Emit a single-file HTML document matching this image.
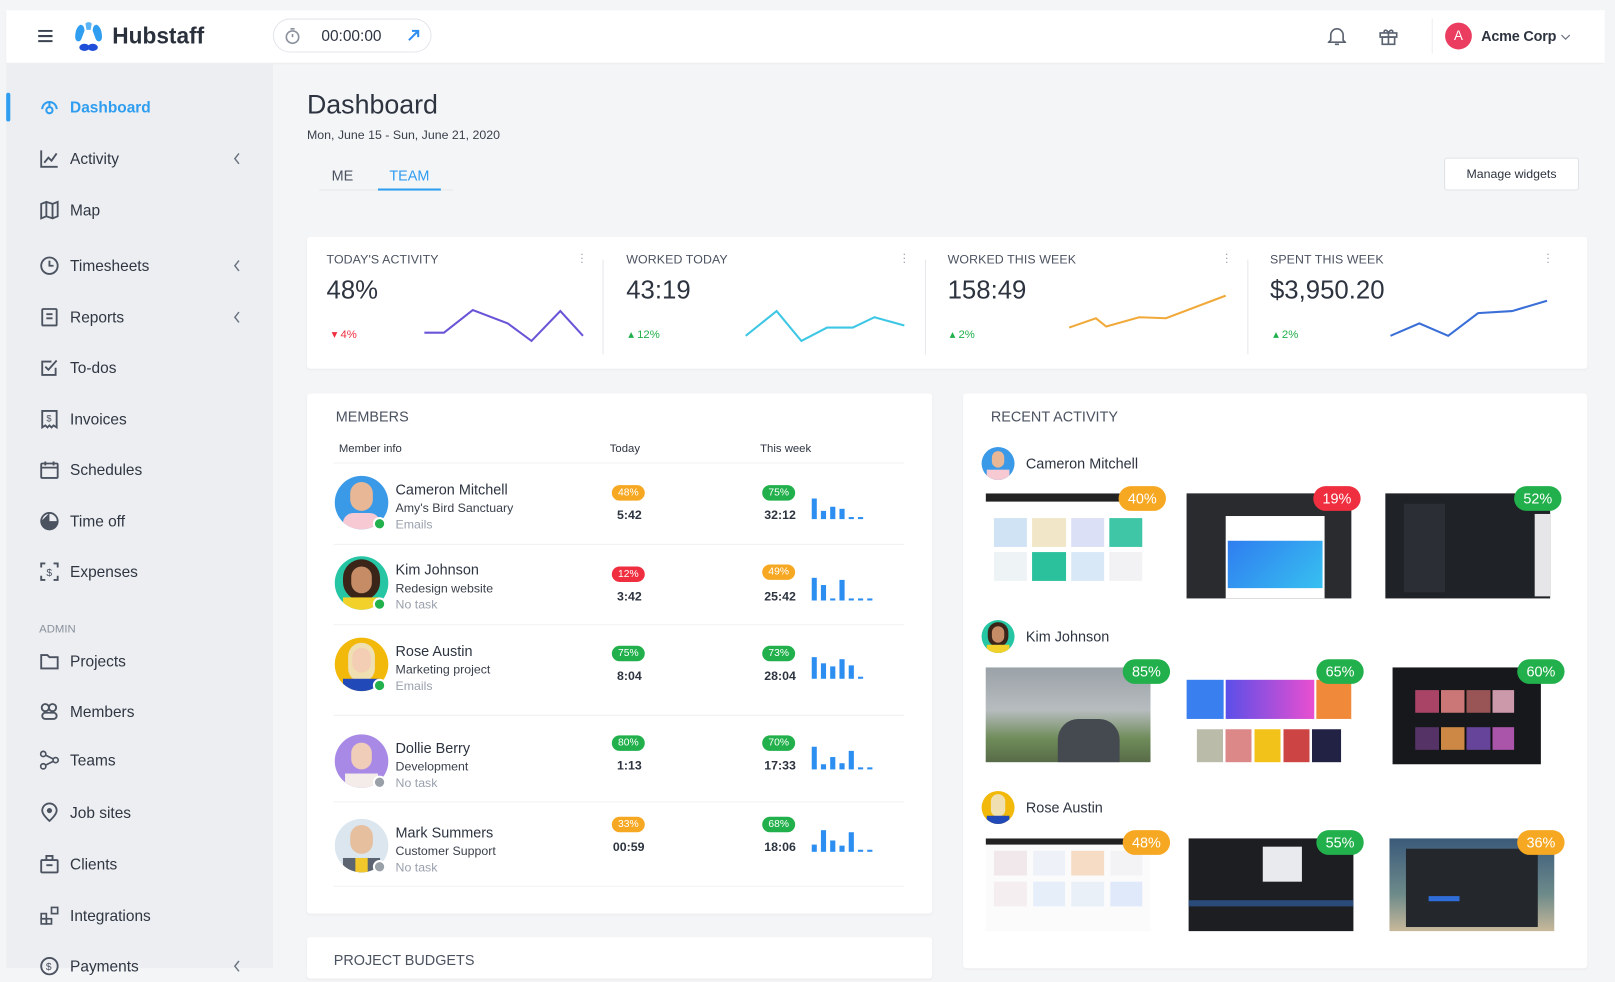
<!DOCTYPE html>
<html><head><meta charset="utf-8">
<style>
*{box-sizing:border-box;margin:0;padding:0}
html,body{width:1615px;height:968px;overflow:hidden;background:#f4f5f7;font-family:"Liberation Sans",Arial,sans-serif;color:#2d3440}
#w{position:absolute;left:0;top:0;width:1568px;height:940px;transform:scale(1.03);transform-origin:0 0;background:#f4f5f7}
.a{position:absolute}
.top{left:6px;top:10px;width:1552px;height:51px;background:#fff;box-shadow:0 1px 2px rgba(0,0,0,.05)}
.side{left:6px;top:61px;width:259px;height:879px;background:#eceef1}
.nav{position:absolute;left:0;width:259px;height:30px;font-size:15px;color:#2f3642}
.nav svg{position:absolute;left:32px;top:5px}
.nav span{position:absolute;left:62px;top:7px}
.nav svg.ch{left:220px;top:9px}
.card{background:#fff;border-radius:3px;box-shadow:0 1px 2px rgba(0,0,0,.04)}
.lbl{font-size:12px;color:#4b5260;letter-spacing:.1px}
.big{font-size:25px;color:#2d3440}
.pill{position:absolute;height:15px;border-radius:8px;color:#fff;font-size:10px;text-align:center;line-height:15px;width:32px}
.or{background:#f7a823}.rd{background:#ef2f3f}.gr{background:#21b04b}
.nm{font-size:14px;color:#2d3440}
.sub{font-size:12px;color:#3a404b}
.tk{font-size:12px;color:#9aa1ad}
.tm{font-size:12px;font-weight:bold;color:#2d3440;position:absolute}
.bp{position:absolute;height:24px;border-radius:12px;color:#fff;font-size:14px;text-align:center;line-height:24px;width:46px}
.shot{position:absolute;width:160px;height:102px;overflow:hidden}
</style></head><body><div id="w">

<div class="a top">
  <svg class="a" style="left:31px;top:19px" width="14" height="12"><path d="M0 1h14M0 6h14M0 11h14" stroke="#3b4250" stroke-width="2"/></svg>
  <svg class="a" style="left:64px;top:10px" width="32" height="32" viewBox="0 0 32 32"><path d="M8 4c3 0 4 3 4 6l-3 8c-2 4-6 2-6-2 0-4 1-10 5-12z" fill="#2f9df0"/><path d="M24 4c-3 0-4 3-4 6l3 8c2 4 6 2 6-2 0-4-1-10-5-12z" fill="#2f9df0"/><path d="M13 3c1-2 5-2 6 0l-1 6h-4z" fill="#5ab4f5"/><ellipse cx="12" cy="26" rx="5" ry="3.5" fill="#1f4fd8"/><ellipse cx="20" cy="26" rx="5" ry="3.5" fill="#1f4fd8"/></svg>
  <div class="a" style="left:103px;top:12px;font-size:22px;font-weight:bold;color:#2a313c">Hubstaff</div>
  <div class="a" style="left:259px;top:8px;width:154px;height:33px;border:1px solid #e3e6ea;border-radius:17px"></div>
  <svg class="a" style="left:270px;top:16px" width="16" height="18"><circle cx="8" cy="10" r="6" fill="none" stroke="#8a919c" stroke-width="1.6"/><path d="M6 2h4M8 10V7" stroke="#8a919c" stroke-width="1.6"/></svg>
  <div class="a" style="left:306px;top:17px;font-size:15px;color:#2d3440">00:00:00</div>
  <svg class="a" style="left:390px;top:18px" width="12" height="12"><path d="M1 11L10 2M4 2h6v6" stroke="#2f8ef0" stroke-width="2" fill="none"/></svg>
  <svg class="a" style="left:1283px;top:15px" width="18" height="20"><path d="M3 14V9a6 6 0 0112 0v5l2 2H1z" fill="none" stroke="#5b6270" stroke-width="1.6"/><path d="M7 18h4" stroke="#5b6270" stroke-width="1.6"/></svg>
  <svg class="a" style="left:1332px;top:15px" width="20" height="20"><rect x="2" y="7" width="16" height="4" fill="none" stroke="#5b6270" stroke-width="1.6"/><rect x="4" y="11" width="12" height="7" fill="none" stroke="#5b6270" stroke-width="1.6"/><path d="M10 7v11M10 7C8 3 5 4 6 7M10 7c2-4 5-3 4 0" fill="none" stroke="#5b6270" stroke-width="1.6"/></svg>
  <div class="a" style="left:1384px;top:8px;width:1px;height:34px;background:#eceef1"></div>
  <div class="a" style="left:1397px;top:12px;width:26px;height:26px;border-radius:13px;background:#ea3d5f;color:#fff;font-size:13px;text-align:center;line-height:26px">A</div>
  <div class="a" style="left:1432px;top:17px;font-size:14px;font-weight:bold;color:#2d3440;letter-spacing:-.2px">Acme Corp</div>
  <svg class="a" style="left:1509px;top:23px" width="10" height="7"><path d="M1 1l4 4 4-4" stroke="#6b7280" stroke-width="1.2" fill="none"/></svg>
</div>

<div class="a side">
  <div class="a" style="left:0;top:29px;width:4px;height:28px;background:#2f9df0;border-radius:2px"></div>
  <div class="nav" style="top:28px;color:#2f9df0;font-weight:bold"><svg width="20" height="20"><path d="M3 12a7 7 0 0114 0" fill="none" stroke="#2f9df0" stroke-width="2"/><circle cx="10" cy="13" r="3" fill="none" stroke="#2f9df0" stroke-width="2"/><path d="M10 10V5" stroke="#2f9df0" stroke-width="2"/></svg><span>Dashboard</span></div>
  <div class="nav" style="top:78px"><svg width="20" height="20"><path d="M2 2v16h16M5 14l4-5 3 3 5-7" fill="none" stroke="#4b5260" stroke-width="1.8"/></svg><span>Activity</span><svg class="ch" width="8" height="12"><path d="M6 1L2 6l4 5" stroke="#6b7280" stroke-width="1.4" fill="none"/></svg></div>
  <div class="nav" style="top:128px"><svg width="20" height="20"><path d="M2 4l5-2 6 2 5-2v14l-5 2-6-2-5 2zM7 2v14M13 4v14" fill="none" stroke="#4b5260" stroke-width="1.8"/></svg><span>Map</span></div>
  <div class="nav" style="top:182px"><svg width="20" height="20"><circle cx="10" cy="10" r="8" fill="none" stroke="#4b5260" stroke-width="1.8"/><path d="M10 5v5h4" fill="none" stroke="#4b5260" stroke-width="1.8"/></svg><span>Timesheets</span><svg class="ch" width="8" height="12"><path d="M6 1L2 6l4 5" stroke="#6b7280" stroke-width="1.4" fill="none"/></svg></div>
  <div class="nav" style="top:232px"><svg width="20" height="20"><rect x="3" y="2" width="14" height="16" rx="1" fill="none" stroke="#4b5260" stroke-width="1.8"/><path d="M7 7h6M7 11h6" stroke="#4b5260" stroke-width="1.8"/></svg><span>Reports</span><svg class="ch" width="8" height="12"><path d="M6 1L2 6l4 5" stroke="#6b7280" stroke-width="1.4" fill="none"/></svg></div>
  <div class="nav" style="top:281px"><svg width="20" height="20"><path d="M16 10v7H3V4h9" fill="none" stroke="#4b5260" stroke-width="1.8"/><path d="M6 9l3 3 8-9" fill="none" stroke="#4b5260" stroke-width="1.8"/></svg><span>To-dos</span></div>
  <div class="nav" style="top:331px"><svg width="20" height="20"><path d="M3 2h14v16l-3-2-2 2-2-2-2 2-2-2-3 2z" fill="none" stroke="#4b5260" stroke-width="1.8"/><text x="7" y="12" font-size="9" fill="#4b5260" font-family="Liberation Sans">$</text></svg><span>Invoices</span></div>
  <div class="nav" style="top:380px"><svg width="20" height="20"><rect x="2" y="4" width="16" height="14" rx="1" fill="none" stroke="#4b5260" stroke-width="1.8"/><path d="M2 8h16M6 2v4M14 2v4" stroke="#4b5260" stroke-width="1.8"/></svg><span>Schedules</span></div>
  <div class="nav" style="top:430px"><svg width="20" height="20"><circle cx="10" cy="10" r="8" fill="none" stroke="#4b5260" stroke-width="1.8"/><path d="M10 2v8h8a8 8 0 01-8 8 8 8 0 01-8-8" fill="#4b5260"/></svg><span>Time off</span></div>
  <div class="nav" style="top:479px"><svg width="20" height="20"><path d="M2 6V2h4M14 2h4v4M18 14v4h-4M6 18H2v-4" fill="none" stroke="#4b5260" stroke-width="1.8"/><text x="7" y="14" font-size="10" fill="#4b5260" font-family="Liberation Sans">$</text></svg><span>Expenses</span></div>
  <div class="a" style="left:32px;top:544px;font-size:11px;color:#8a919c">ADMIN</div>
  <div class="nav" style="top:566px"><svg width="20" height="20"><path d="M2 4h6l2 2h8v11H2z" fill="none" stroke="#4b5260" stroke-width="1.8"/></svg><span>Projects</span></div>
  <div class="nav" style="top:615px"><svg width="20" height="20"><circle cx="6" cy="6" r="3.5" fill="none" stroke="#4b5260" stroke-width="1.8"/><circle cx="13" cy="6" r="3.5" fill="none" stroke="#4b5260" stroke-width="1.8"/><rect x="3" y="11" width="14" height="6" rx="3" fill="none" stroke="#4b5260" stroke-width="1.8"/></svg><span>Members</span></div>
  <div class="nav" style="top:662px"><svg width="20" height="20"><circle cx="4" cy="4" r="2.5" fill="none" stroke="#4b5260" stroke-width="1.6"/><circle cx="4" cy="16" r="2.5" fill="none" stroke="#4b5260" stroke-width="1.6"/><circle cx="16" cy="10" r="2.5" fill="none" stroke="#4b5260" stroke-width="1.6"/><path d="M6 5l8 4M6 15l8-4" stroke="#4b5260" stroke-width="1.6"/></svg><span>Teams</span></div>
  <div class="nav" style="top:713px"><svg width="20" height="20"><path d="M10 18s-7-6-7-10a7 7 0 0114 0c0 4-7 10-7 10z" fill="none" stroke="#4b5260" stroke-width="1.8"/><circle cx="10" cy="8" r="2.5" fill="#4b5260"/></svg><span>Job sites</span></div>
  <div class="nav" style="top:763px"><svg width="20" height="20"><rect x="2" y="6" width="16" height="12" rx="1" fill="none" stroke="#4b5260" stroke-width="1.8"/><path d="M7 6V2h6v4M7 11h6" fill="none" stroke="#4b5260" stroke-width="1.8"/></svg><span>Clients</span></div>
  <div class="nav" style="top:813px"><svg width="20" height="20"><rect x="2" y="8" width="5" height="5" fill="none" stroke="#4b5260" stroke-width="1.6"/><rect x="2" y="13" width="5" height="5" fill="none" stroke="#4b5260" stroke-width="1.6"/><rect x="7" y="13" width="5" height="5" fill="none" stroke="#4b5260" stroke-width="1.6"/><rect x="12" y="2" width="6" height="6" fill="none" stroke="#4b5260" stroke-width="1.6"/></svg><span>Integrations</span></div>
  <div class="nav" style="top:862px"><svg width="20" height="20"><circle cx="10" cy="10" r="8" fill="none" stroke="#4b5260" stroke-width="1.8"/><text x="6.5" y="14" font-size="10" fill="#4b5260" font-family="Liberation Sans">$</text></svg><span>Payments</span><svg class="ch" width="8" height="12"><path d="M6 1L2 6l4 5" stroke="#6b7280" stroke-width="1.4" fill="none"/></svg></div>
</div>

<div class="a" style="left:298px;top:86px;font-size:26px;color:#2d3440">Dashboard</div>
<div class="a" style="left:298px;top:124px;font-size:12px;color:#3a404b">Mon, June 15 - Sun, June 21, 2020</div>
<div class="a" style="left:310px;top:184px;width:130px;height:1px;background:#e5e7eb"></div>
<div class="a" style="left:322px;top:162px;font-size:14px;color:#4b5260">ME</div>
<div class="a" style="left:378px;top:162px;font-size:14px;color:#2f9df0">TEAM</div>
<div class="a" style="left:367px;top:183px;width:61px;height:2px;background:#2f9df0"></div>
<div class="a" style="left:1402px;top:153px;width:131px;height:32px;background:#fff;border:1px solid #dfe2e6;border-radius:3px;font-size:12px;color:#2d3440;text-align:center;line-height:30px">Manage widgets</div>

<div class="a card" style="left:298px;top:230px;width:1243px;height:128px">
  <div class="a" style="left:287px;top:22px;width:1px;height:92px;background:#e5e7eb"></div>
  <div class="a" style="left:600px;top:22px;width:1px;height:92px;background:#e5e7eb"></div>
  <div class="a" style="left:913px;top:22px;width:1px;height:92px;background:#e5e7eb"></div>
  <div class="a lbl" style="left:19px;top:15px">TODAY'S ACTIVITY</div>
  <div class="a lbl" style="left:310px;top:15px">WORKED TODAY</div>
  <div class="a lbl" style="left:622px;top:15px">WORKED THIS WEEK</div>
  <div class="a lbl" style="left:935px;top:15px">SPENT THIS WEEK</div>
  <div class="a big" style="left:19px;top:38px">48%</div>
  <div class="a big" style="left:310px;top:38px">43:19</div>
  <div class="a big" style="left:622px;top:38px">158:49</div>
  <div class="a big" style="left:935px;top:38px">$3,950.20</div>
  <div class="a" style="left:24px;top:88px;font-size:11px;color:#ef2f3f">▾ 4%</div>
  <div class="a" style="left:312px;top:88px;font-size:11px;color:#21b04b">▴ 12%</div>
  <div class="a" style="left:624px;top:88px;font-size:11px;color:#21b04b">▴ 2%</div>
  <div class="a" style="left:938px;top:88px;font-size:11px;color:#21b04b">▴ 2%</div>
  <div class="a" style="left:265px;top:14px;color:#9aa1ad;font-size:12px;line-height:4px">·<br>·<br>·</div>
  <div class="a" style="left:578px;top:14px;color:#9aa1ad;font-size:12px;line-height:4px">·<br>·<br>·</div>
  <div class="a" style="left:891px;top:14px;color:#9aa1ad;font-size:12px;line-height:4px">·<br>·<br>·</div>
  <div class="a" style="left:1203px;top:14px;color:#9aa1ad;font-size:12px;line-height:4px">·<br>·<br>·</div>
  <svg class="a" style="left:0;top:0" width="1243" height="128"><polyline points="114,93 133,93 161,71 195,84 218,101 246,72 268,96" fill="none" stroke="#6a55d8" stroke-width="2"/><polyline points="426,96 456,72 480,101 505,88 530,88 551,78 580,86" fill="none" stroke="#3ec7e5" stroke-width="2"/><polyline points="740,88 766,79 776,87 808,78 834,79 892,57" fill="none" stroke="#f1a93a" stroke-width="2"/><polyline points="1052,96 1080,84 1108,96 1137,74 1170,72 1204,62" fill="none" stroke="#3a6fd8" stroke-width="2"/></svg>
</div>

<div class="a card" style="left:298px;top:382px;width:607px;height:505px">
  <div class="a" style="left:28px;top:14px;font-size:14px;color:#4b5260">MEMBERS</div>
  <div class="a" style="left:31px;top:48px;font-size:11px;color:#2d3440">Member info</div>
  <div class="a" style="left:294px;top:48px;font-size:11px;color:#2d3440">Today</div>
  <div class="a" style="left:440px;top:48px;font-size:11px;color:#2d3440">This week</div>
  <div class="a" style="left:26px;top:67px;width:554px;height:1px;background:#f0f1f3"></div>
  <div class="a" style="left:26px;top:146px;width:554px;height:1px;background:#f0f1f3"></div>
  <div class="a" style="left:26px;top:224px;width:554px;height:1px;background:#f0f1f3"></div>
  <div class="a" style="left:26px;top:312px;width:554px;height:1px;background:#f0f1f3"></div>
  <div class="a" style="left:26px;top:396px;width:554px;height:1px;background:#f0f1f3"></div>
  <div class="a" style="left:26px;top:478px;width:554px;height:1px;background:#f0f1f3"></div>
</div>

<div class="a card" style="left:935px;top:382px;width:606px;height:558px">
  <div class="a" style="left:27px;top:14px;font-size:14px;color:#4b5260">RECENT ACTIVITY</div>
  <div class="a nm" style="left:61px;top:60px">Cameron Mitchell</div>
  <div class="a nm" style="left:61px;top:228px">Kim Johnson</div>
  <div class="a nm" style="left:61px;top:394px">Rose Austin</div>
</div>
<div class="a card" style="left:298px;top:910px;width:607px;height:40px"><div class="a" style="left:26px;top:14px;font-size:14px;color:#4b5260">PROJECT BUDGETS</div></div>

<div class="a" style="left:325px;top:462px;width:52px;height:52px;border-radius:26px;background:#3b9ae8;overflow:hidden"><div class="a" style="left:15px;top:6px;width:22px;height:28px;border-radius:11px;background:#e8b795"></div><div class="a" style="left:8px;top:36px;width:36px;height:20px;border-radius:10px;background:#f7c9d3"></div></div>
<div class="a" style="left:325px;top:540px;width:52px;height:52px;border-radius:26px;background:#26c6a4;overflow:hidden"><div class="a" style="left:8px;top:3px;width:36px;height:40px;border-radius:18px;background:#3a2518"></div><div class="a" style="left:16px;top:10px;width:20px;height:26px;border-radius:10px;background:#c58c66"></div><div class="a" style="left:8px;top:40px;width:36px;height:16px;background:#f2d12a"></div></div>
<div class="a" style="left:325px;top:619px;width:52px;height:52px;border-radius:26px;background:#f2b90a;overflow:hidden"><div class="a" style="left:13px;top:5px;width:26px;height:38px;border-radius:13px;background:#f0dfb0"></div><div class="a" style="left:17px;top:10px;width:18px;height:24px;border-radius:9px;background:#f4cdb5"></div><div class="a" style="left:8px;top:40px;width:36px;height:16px;background:#2149b8"></div></div>
<div class="a" style="left:325px;top:713px;width:52px;height:52px;border-radius:26px;background:#a88ae6;overflow:hidden"><div class="a" style="left:16px;top:8px;width:20px;height:26px;border-radius:10px;background:#f0cdb8"></div><div class="a" style="left:10px;top:38px;width:32px;height:16px;background:#f3ece8"></div></div>
<div class="a" style="left:325px;top:795px;width:52px;height:52px;border-radius:26px;background:#dbe6ef;overflow:hidden"><div class="a" style="left:15px;top:6px;width:22px;height:28px;border-radius:11px;background:#e6bf9f"></div><div class="a" style="left:8px;top:38px;width:36px;height:16px;background:#5b6470"></div><div class="a" style="left:20px;top:38px;width:12px;height:16px;background:#f2c72b"></div></div>
<div class="a" style="left:362px;top:502px;width:13px;height:13px;border-radius:7px;background:#22b14c;border:2px solid #fff"></div>
<div class="a" style="left:362px;top:580px;width:13px;height:13px;border-radius:7px;background:#22b14c;border:2px solid #fff"></div>
<div class="a" style="left:362px;top:659px;width:13px;height:13px;border-radius:7px;background:#22b14c;border:2px solid #fff"></div>
<div class="a" style="left:362px;top:753px;width:13px;height:13px;border-radius:7px;background:#9aa0a8;border:2px solid #fff"></div>
<div class="a" style="left:362px;top:835px;width:13px;height:13px;border-radius:7px;background:#9aa0a8;border:2px solid #fff"></div>

<div class="a" style="left:384px;top:467px"><div class="nm">Cameron Mitchell</div><div class="sub" style="margin-top:3px">Amy's Bird Sanctuary</div><div class="tk" style="margin-top:2px">Emails</div></div>
<div class="a" style="left:384px;top:545px"><div class="nm">Kim Johnson</div><div class="sub" style="margin-top:3px">Redesign website</div><div class="tk" style="margin-top:2px">No task</div></div>
<div class="a" style="left:384px;top:624px"><div class="nm">Rose Austin</div><div class="sub" style="margin-top:3px">Marketing project</div><div class="tk" style="margin-top:2px">Emails</div></div>
<div class="a" style="left:384px;top:718px"><div class="nm">Dollie Berry</div><div class="sub" style="margin-top:3px">Development</div><div class="tk" style="margin-top:2px">No task</div></div>
<div class="a" style="left:384px;top:800px"><div class="nm">Mark Summers</div><div class="sub" style="margin-top:3px">Customer Support</div><div class="tk" style="margin-top:2px">No task</div></div>

<div class="pill or" style="left:594px;top:471px">48%</div><div class="tm" style="left:599px;top:493px">5:42</div>
<div class="pill gr" style="left:740px;top:471px">75%</div><div class="tm" style="left:742px;top:493px">32:12</div>
<div class="pill rd" style="left:594px;top:550px">12%</div><div class="tm" style="left:599px;top:572px">3:42</div>
<div class="pill or" style="left:740px;top:548px">49%</div><div class="tm" style="left:742px;top:572px">25:42</div>
<div class="pill gr" style="left:594px;top:627px">75%</div><div class="tm" style="left:599px;top:649px">8:04</div>
<div class="pill gr" style="left:740px;top:627px">73%</div><div class="tm" style="left:742px;top:649px">28:04</div>
<div class="pill gr" style="left:594px;top:714px">80%</div><div class="tm" style="left:599px;top:736px">1:13</div>
<div class="pill gr" style="left:740px;top:714px">70%</div><div class="tm" style="left:742px;top:736px">17:33</div>
<div class="pill or" style="left:594px;top:793px">33%</div><div class="tm" style="left:595px;top:815px">00:59</div>
<div class="pill gr" style="left:740px;top:793px">68%</div><div class="tm" style="left:742px;top:815px">18:06</div>

<svg class="a" style="left:788px;top:470px" width="64" height="370"><g fill="#2b8ef0">
<rect x="0" y="14" width="5" height="20"/><rect x="9" y="26" width="5" height="8"/><rect x="18" y="22" width="5" height="12"/><rect x="27" y="24" width="5" height="10"/><rect x="36" y="32" width="5" height="2"/><rect x="45" y="32" width="5" height="2"/>
<rect x="0" y="91" width="5" height="22"/><rect x="9" y="98" width="5" height="15"/><rect x="18" y="111" width="5" height="2"/><rect x="27" y="93" width="5" height="20"/><rect x="36" y="111" width="5" height="2"/><rect x="45" y="111" width="5" height="2"/><rect x="54" y="111" width="5" height="2"/>
<rect x="0" y="168" width="5" height="21"/><rect x="9" y="174" width="5" height="15"/><rect x="18" y="177" width="5" height="12"/><rect x="27" y="170" width="5" height="19"/><rect x="36" y="176" width="5" height="13"/><rect x="45" y="187" width="5" height="2"/>
<rect x="0" y="255" width="5" height="22"/><rect x="9" y="272" width="5" height="5"/><rect x="18" y="265" width="5" height="12"/><rect x="27" y="271" width="5" height="6"/><rect x="36" y="259" width="5" height="18"/><rect x="45" y="275" width="5" height="2"/><rect x="54" y="275" width="5" height="2"/>
<rect x="0" y="350" width="5" height="7"/><rect x="9" y="336" width="5" height="21"/><rect x="18" y="346" width="5" height="11"/><rect x="27" y="351" width="5" height="6"/><rect x="36" y="338" width="5" height="19"/><rect x="45" y="355" width="5" height="2"/><rect x="54" y="355" width="5" height="2"/></g></svg>

<div class="a" style="left:953px;top:434px;width:32px;height:32px;border-radius:16px;background:#3b9ae8;overflow:hidden"><div class="a" style="left:10px;top:4px;width:12px;height:16px;border-radius:6px;background:#e8b795"></div><div class="a" style="left:5px;top:22px;width:22px;height:12px;background:#f7c9d3"></div></div>
<div class="a" style="left:953px;top:602px;width:32px;height:32px;border-radius:16px;background:#26c6a4;overflow:hidden"><div class="a" style="left:6px;top:2px;width:20px;height:24px;border-radius:10px;background:#3a2518"></div><div class="a" style="left:10px;top:6px;width:12px;height:16px;border-radius:6px;background:#c58c66"></div><div class="a" style="left:5px;top:24px;width:22px;height:10px;background:#f2d12a"></div></div>
<div class="a" style="left:953px;top:768px;width:32px;height:32px;border-radius:16px;background:#f2b90a;overflow:hidden"><div class="a" style="left:9px;top:3px;width:14px;height:22px;border-radius:7px;background:#f0dfb0"></div><div class="a" style="left:5px;top:24px;width:22px;height:10px;background:#2149b8"></div></div>

<div class="shot" style="left:957px;top:479px;background:#fff"><div style="height:8px;background:#222"></div><div style="display:grid;grid-template-columns:repeat(4,1fr);gap:5px;padding:16px 8px 4px 8px"><div style="height:28px;background:#cfe3f5"></div><div style="height:28px;background:#f1e6c8"></div><div style="height:28px;background:#dce0f6"></div><div style="height:28px;background:#3ec6a6"></div><div style="height:28px;background:#eef3f6"></div><div style="height:28px;background:#2bc19d"></div><div style="height:28px;background:#d8e8f7"></div><div style="height:28px;background:#f2f2f4"></div></div></div>
<div class="shot" style="left:1152px;top:479px;background:#2a2b2e"><div class="a" style="left:38px;top:22px;width:96px;height:80px;background:#fff"></div><div class="a" style="left:40px;top:46px;width:92px;height:46px;background:linear-gradient(135deg,#2f7df0,#37c0f0)"></div></div>
<div class="shot" style="left:1345px;top:479px;background:#1f2226"><div class="a" style="left:18px;top:10px;width:40px;height:86px;background:#2b2f35"></div><div class="a" style="left:145px;top:20px;width:18px;height:80px;background:#e6e6e8"></div></div>
<div class="shot" style="left:957px;top:648px;height:92px;background:linear-gradient(180deg,#9aa2a8 0%,#b7bcbf 45%,#6f8c5a 75%,#586b48 100%)"><div class="a" style="left:70px;top:50px;width:60px;height:42px;border-radius:20px 20px 0 0;background:#444a50"></div></div>
<div class="shot" style="left:1152px;top:648px;height:94px;background:#fff"><div class="a" style="left:0;top:12px;width:36px;height:38px;background:#3a7ff0"></div><div class="a" style="left:38px;top:12px;width:86px;height:38px;background:linear-gradient(90deg,#5b4fe8,#e94fd0)"></div><div class="a" style="left:126px;top:12px;width:34px;height:38px;background:#f08a3a"></div><div class="a" style="left:10px;top:60px;width:140px;height:32px;background:linear-gradient(90deg,#bba 0,#bba 18%,#fff 18%,#fff 20%,#d88 20%,#d88 38%,#fff 38%,#fff 40%,#f2c21a 40%,#f2c21a 58%,#fff 58%,#fff 60%,#c44 60%,#c44 78%,#fff 78%,#fff 80%,#224 80%)"></div></div>
<div class="shot" style="left:1352px;top:648px;height:94px;width:144px;background:#17181b"><div class="a" style="left:22px;top:22px;width:96px;height:22px;background:linear-gradient(90deg,#a46 0,#a46 24%,#111 24%,#111 26%,#c77 26%,#c77 50%,#111 50%,#111 52%,#955 52%,#955 76%,#111 76%,#111 78%,#c9a 78%)"></div><div class="a" style="left:22px;top:58px;width:96px;height:22px;background:linear-gradient(90deg,#536 0,#536 24%,#111 24%,#111 26%,#c84 26%,#c84 50%,#111 50%,#111 52%,#649 52%,#649 76%,#111 76%,#111 78%,#a5a 78%)"></div></div>
<div class="shot" style="left:957px;top:814px;height:90px;background:#fbfbfc"><div style="height:6px;background:#222"></div><div style="display:grid;grid-template-columns:repeat(4,1fr);gap:6px;padding:6px 8px"><div style="height:24px;background:#f0e8ea"></div><div style="height:24px;background:#eef2f8"></div><div style="height:24px;background:#f6dcc4"></div><div style="height:24px;background:#f3f3f6"></div><div style="height:24px;background:#f5eef0"></div><div style="height:24px;background:#e6eefa"></div><div style="height:24px;background:#eaf0f8"></div><div style="height:24px;background:#dfe9fa"></div></div></div>
<div class="shot" style="left:1154px;top:814px;height:90px;background:#1d1e21"><div class="a" style="left:72px;top:8px;width:38px;height:34px;background:#e8eaee"></div><div class="a" style="left:0;top:60px;width:160px;height:6px;background:#2a4a7a"></div></div>
<div class="shot" style="left:1349px;top:814px;height:90px;background:linear-gradient(180deg,#3a5a7a,#6d8a8a 60%,#c8b89a)"><div class="a" style="left:16px;top:10px;width:128px;height:76px;background:#24272c"></div><div class="a" style="left:38px;top:56px;width:30px;height:5px;background:#2f6ed8"></div></div>

<div class="bp or" style="left:1086px;top:472px">40%</div>
<div class="bp rd" style="left:1275px;top:472px">19%</div>
<div class="bp gr" style="left:1470px;top:472px">52%</div>
<div class="bp gr" style="left:1090px;top:640px">85%</div>
<div class="bp gr" style="left:1278px;top:640px">65%</div>
<div class="bp gr" style="left:1473px;top:640px">60%</div>
<div class="bp or" style="left:1090px;top:806px">48%</div>
<div class="bp gr" style="left:1278px;top:806px">55%</div>
<div class="bp or" style="left:1473px;top:806px">36%</div>

</div></body></html>
